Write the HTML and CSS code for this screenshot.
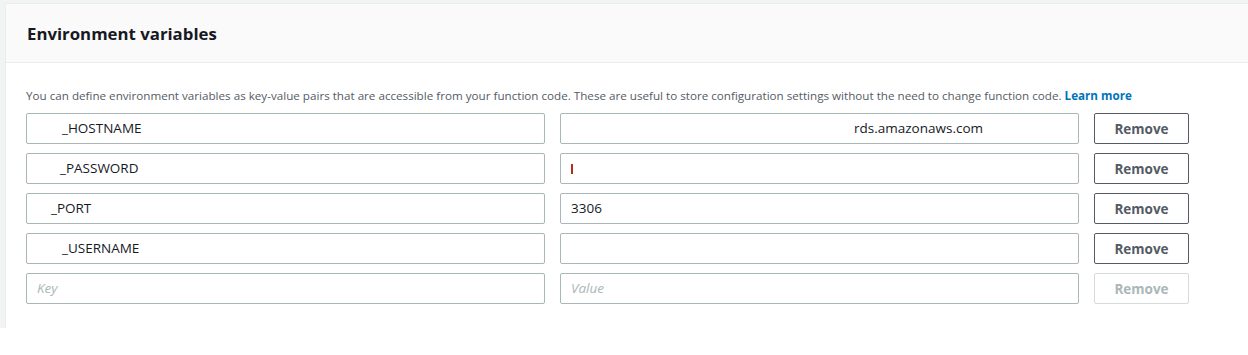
FILE: index.html
```html
<!DOCTYPE html>
<html lang="en">

<head>
    <meta charset="UTF-8">
    <meta name="viewport" content="width=device-width, initial-scale=1.0">
    <title>Environment variables</title>
    <link rel="stylesheet" href="styles.css">
</head>

<body>

    <div class="page">
        <div class="panel">
            <!-- Cabecera del panel -->
            <div class="panel-header">
                <h2>Environment variables</h2>
            </div>

            <div class="panel-body">
                <p class="description">
                    You can define environment variables as key-value pairs that are accessible from your function code. These are useful to store configuration settings without the need to change function code.
                    <a href="#">Learn more</a>
                </p>

                <!-- Filas clave / valor -->
                <div class="env-row">
                    <div class="field"><span class="hidden-part w25"></span>_HOSTNAME</div>
                    <div class="field"><span class="hidden-part w283"></span>rds.amazonaws.com</div>
                    <button class="remove">Remove</button>
                </div>

                <div class="env-row">
                    <div class="field"><span class="hidden-part w23"></span>_PASSWORD</div>
                    <div class="field"><span class="mark"></span></div>
                    <button class="remove">Remove</button>
                </div>

                <div class="env-row">
                    <div class="field"><span class="hidden-part w14"></span>_PORT</div>
                    <div class="field">3306</div>
                    <button class="remove">Remove</button>
                </div>

                <div class="env-row">
                    <div class="field"><span class="hidden-part w25"></span>_USERNAME</div>
                    <div class="field"></div>
                    <button class="remove">Remove</button>
                </div>

                <div class="env-row">
                    <div class="field placeholder">Key</div>
                    <div class="field placeholder">Value</div>
                    <button class="remove" disabled>Remove</button>
                </div>
            </div>
        </div>
    </div>

</body>

</html>
```

FILE: styles.css
```css
body {
    margin: 0;
    padding: 0;
    background-color: #ffffff;
    font-family: "Open Sans", "Noto Sans", Arial, sans-serif;
    color: #16191f;
}

/* Fondo gris de la consola */
.page {
    background-color: #f2f3f3;
    padding: 3px 0 0 5px;
    height: 325px;
    overflow: hidden;
}

.panel {
    background-color: #ffffff;
    border: 1px solid #eaeded;
    border-right: none;
    height: 340px;
}

.panel-header {
    background-color: #fafafa;
    border-bottom: 1px solid #eaeded;
    height: 58px;
    display: flex;
    align-items: center;
    padding-left: 21px;
}

.panel-header h2 {
    margin: 0;
    font-size: 16.8px;
    font-weight: 700;
    color: #16191f;
}

.panel-body {
    padding: 24px 20px 0 20px;
}

.description {
    margin: 0 0 8px 0;
    font-size: 11.65px;
    line-height: 18px;
    color: #545b64;
}

.description a {
    color: #0073bb;
    font-weight: 700;
    text-decoration: none;
}

.env-row {
    display: flex;
    gap: 15px;
    margin-bottom: 9px;
}

.field {
    box-sizing: border-box;
    width: 519px;
    height: 31px;
    border: 1px solid #aab7b8;
    border-radius: 2px;
    padding: 0 10px;
    font-size: 13.5px;
    line-height: 29px;
    color: #16191f;
    white-space: nowrap;
    overflow: hidden;
}

.field.placeholder {
    color: #aab7b8;
    font-style: italic;
}

.hidden-part {
    display: inline-block;
}

.w14 { width: 14px; }
.w23 { width: 23px; }
.w25 { width: 25px; }
.w283 { width: 283px; }

/* Resto visible del valor tapado */
.mark {
    display: inline-block;
    width: 2px;
    height: 10px;
    background-color: #b0301a;
    vertical-align: middle;
}

.remove {
    box-sizing: border-box;
    width: 95px;
    height: 31px;
    background-color: #ffffff;
    border: 1px solid #545b64;
    border-radius: 2px;
    font-family: inherit;
    font-size: 13.5px;
    font-weight: 700;
    color: #545b64;
    cursor: pointer;
}

.remove:disabled {
    border-color: #d5dbdb;
    color: #aab7b8;
    cursor: default;
}
```
